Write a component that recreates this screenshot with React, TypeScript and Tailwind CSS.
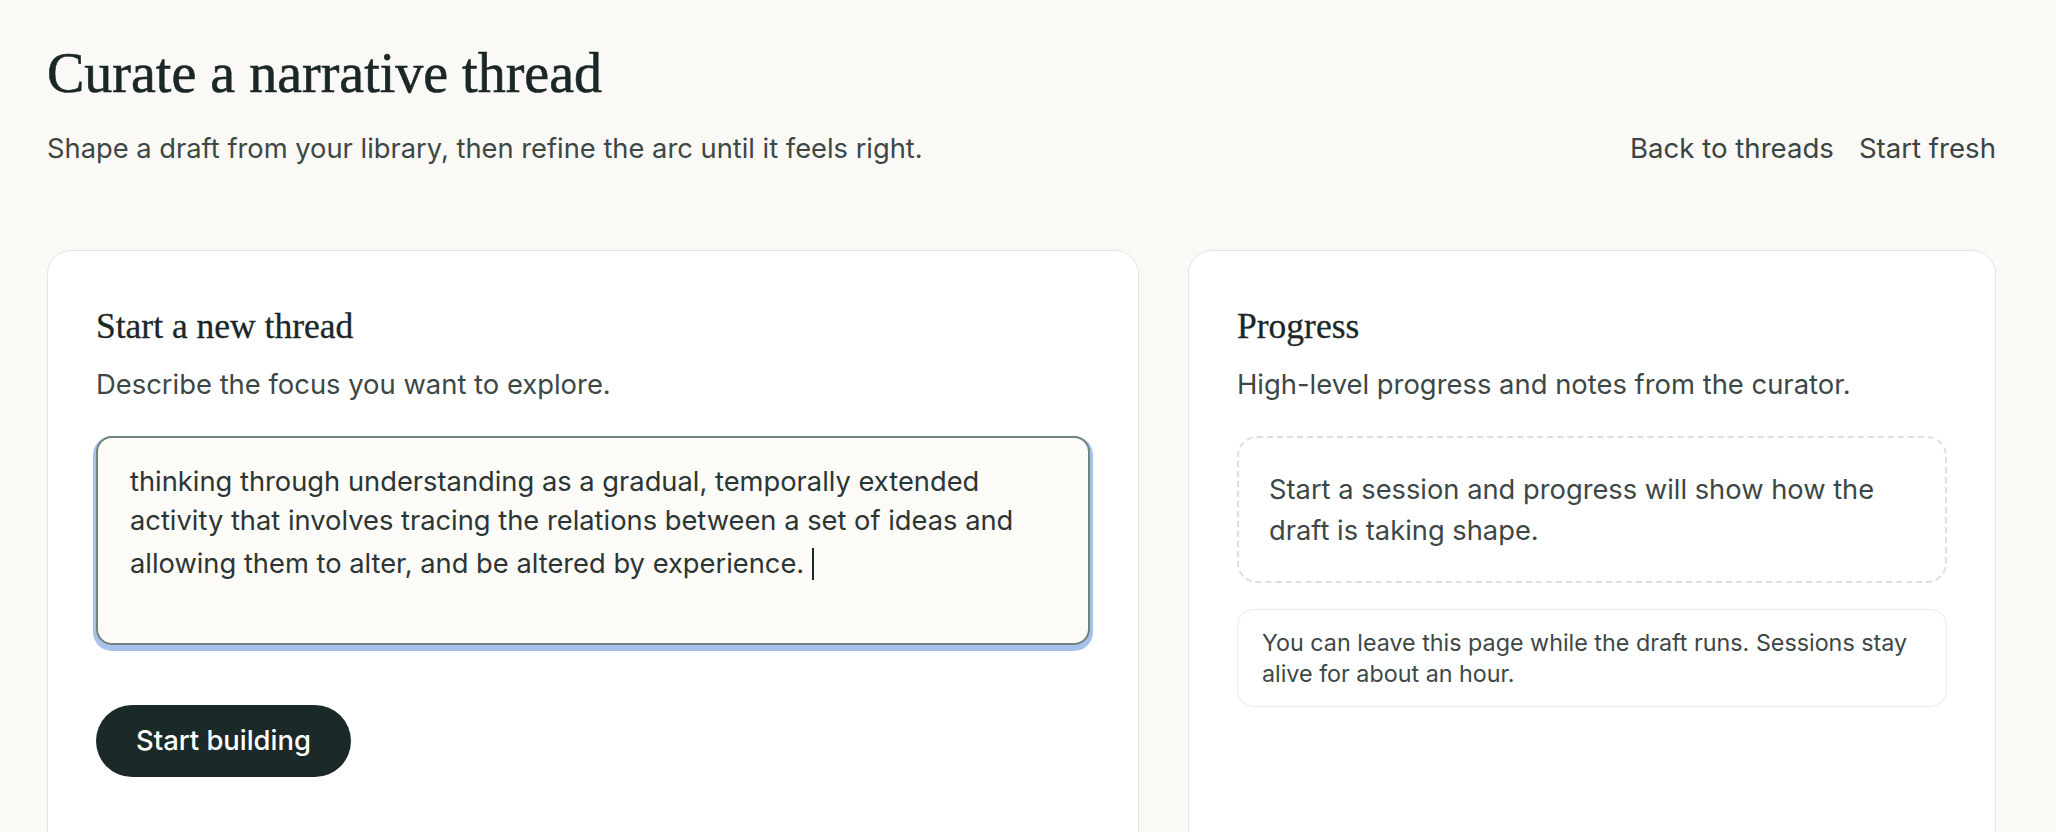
import React from "react";

const sans = "font-['Inter','Noto_Sans',sans-serif]";
const serif = "font-['Liberation_Serif','Times_New_Roman',serif]";

export default function App() {
  return (
    <div className={`min-h-screen bg-[#faf9f5] pl-[47px] pr-[60px] pt-[43px] ${sans}`}>
      <header className="flex items-end justify-between">
        <div>
          <h1 className={`${serif} text-[56px] leading-[1.1] text-[#1b2727] [-webkit-text-stroke:0.6px_#1b2727]`}>
            Curate a narrative thread
          </h1>
          <p className="mt-[25px] text-[27.3px] leading-[38px] text-[#3d4846]">
            Shape a draft from your library, then refine the arc until it feels right.
          </p>
        </div>
        <nav className="flex items-center gap-[25px] text-[27.6px] leading-[40px] text-[#3a4543]">
          <a href="#" className="hover:underline">Back to threads</a>
          <a href="#" className="hover:underline">Start fresh</a>
        </nav>
      </header>

      <main className="mt-[82px] grid grid-cols-[1092px_808px] gap-[49px]">
        <section className="min-h-[640px] rounded-[24px] border border-[#e4e4e8] bg-white p-[48px]">
          <h2 className={`${serif} text-[35.5px] leading-[54px] text-[#1b2727] [-webkit-text-stroke:0.3px_#1b2727]`}>
            Start a new thread
          </h2>
          <p className="mt-[11px] text-[27.4px] leading-[40px] text-[#3d4846]">
            Describe the focus you want to explore.
          </p>
          <div
            role="textbox"
            className="mt-[32px] h-[209px] rounded-[16px] border-2 border-[#70837e] bg-[#fcfbf8] px-[32px] pb-[24px] pt-[24px] text-[27.3px] leading-[39.5px] text-[#2b3634] shadow-[0_3px_0_3px_#a7c1ea]"
          >
            thinking through understanding as a gradual, temporally extended activity that involves tracing the
            relations between a set of ideas and allowing them to alter, and be altered by experience.{" "}
            <span className="inline-block h-[32px] w-[2px] translate-y-[7px] bg-[#1b2727]" />
          </div>
          <button className="mt-[60px] h-[72px] rounded-full bg-[#1c2929] px-[40px] text-[27.4px] font-medium text-white">
            Start building
          </button>
        </section>

        <section className="min-h-[640px] rounded-[24px] border border-[#e4e4e8] bg-white p-[48px]">
          <h2 className={`${serif} text-[35.5px] leading-[54px] text-[#1b2727] [-webkit-text-stroke:0.3px_#1b2727]`}>
            Progress
          </h2>
          <p className="mt-[11px] text-[27.4px] leading-[40px] text-[#3d4846]">
            High-level progress and notes from the curator.
          </p>
          <div className="mt-[32px] rounded-[20px] border-2 border-dashed border-[#dedede] px-[30px] pb-[30px] pt-[31px] text-[27.3px] leading-[41px] text-[#3d4846]">
            Start a session and progress will show how the draft is taking shape.
          </div>
          <div className="mt-[26px] rounded-[16px] border border-[#ebebeb] px-[24px] py-[17px] text-[23.3px] leading-[31px] text-[#3d4846]">
            You can leave this page while the draft runs. Sessions stay alive for about an hour.
          </div>
        </section>
      </main>
    </div>
  );
}
